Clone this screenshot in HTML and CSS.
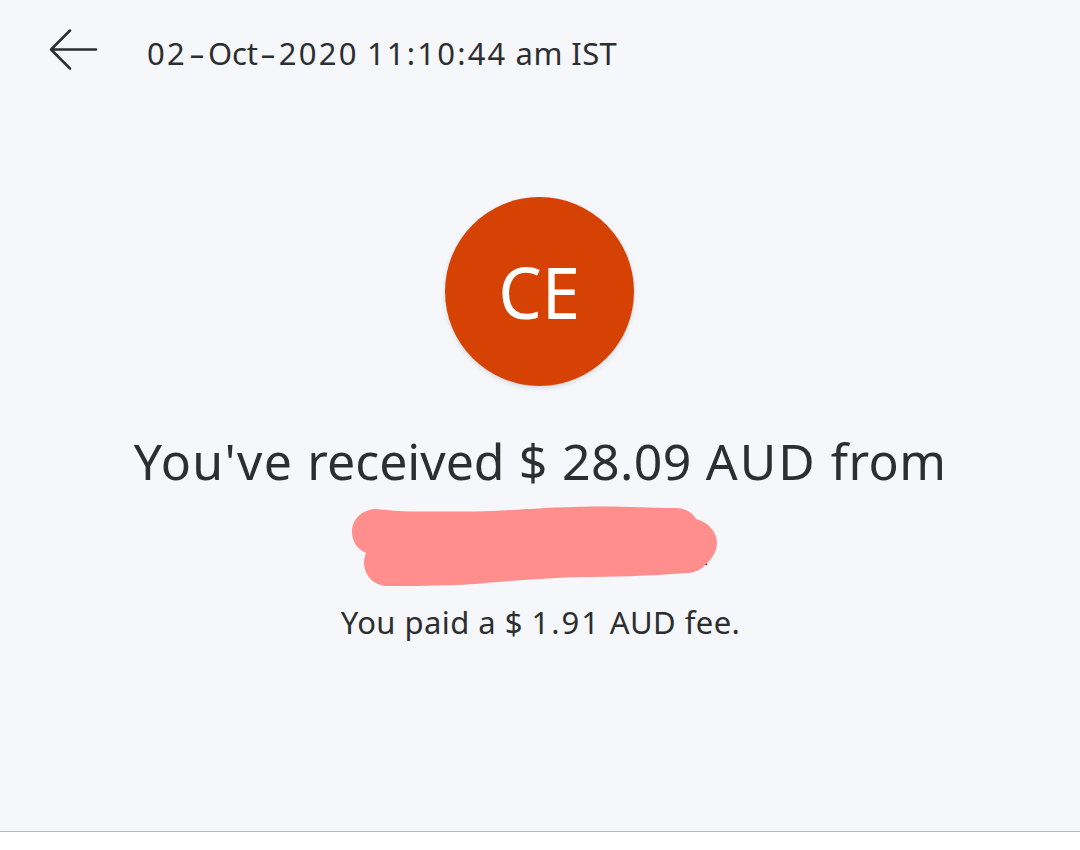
FILE: index.html
```html
<!DOCTYPE html>
<html lang="en">
  <head>
    <meta charset="utf-8">
    <title>Transaction Details</title>
    <link rel="stylesheet" href="styles.css">
  </head>
  <body>
    <div class="details">
      <div class="header">
        <svg class="back" width="50" height="44" viewBox="0 0 50 44">
          <path d="M22 3.500L3 22.500L22 41.500M3 22.500H48" />
        </svg>
        <div class="date"><span class="digits">02<span class="dash">-</span></span><span class="month">Oct</span><span class="digits"><span class="dash">-</span>2020</span> <span class="time">11:10:44</span> <span class="zone">am IST</span></div>
      </div>
      <div class="avatar"><span>CE</span></div>
      <div class="amount"><span class="wide">You've</span> received <span class="value">$ 28.09</span> <span class="currency">AUD</span> <span class="value">from</span></div>
      <svg class="sender" width="370" height="84" viewBox="350 504 370 84">
        <path class="dot" d="M704 562h3v3h-3z" />
        <path class="marker" d="M375 509C388 510 400 511.500 412 511.500H475C510 511 540 507 600 506.500C630 506.500 650 508 676 508C685 508 692 512 696 519C708 522 717 532 717 543C717 553 710 561 703 567C698 571 693 573 686 573C650 576 610 577 580 577C540 578 500 582 475 584C440 586 410 586 386 586C373 585 364 575 364 562C364 559 365 556 366 553C357 549 352 541 352 532C352 519 362 510 375 509Z" />
      </svg>
      <div class="fee">You paid a $ <span class="fee-value">1.91</span> AUD fee.</div>
    </div>
  </body>
</html>
```
FILE: styles.css
```css
body {
  font-family: "Noto Sans", sans-serif;
  margin: 0;
  background-color: #fff;
  color: #2c2e2f;
}
.details {
  display: flex;
  flex-direction: column;
  align-items: center;
  box-sizing: border-box;
  height: 832px;
  background-color: #f5f7fb;
  border-bottom: 1px solid #b7b9bc;
}
.header {
  display: flex;
  box-sizing: border-box;
  width: 100%;
  height: 197px;
  padding: 27px 0 0 48px;
}
.back {
  fill: none;
  stroke: #2c2e2f;
  stroke-width: 2.5;
  stroke-linecap: round;
  stroke-linejoin: round;
}
.date {
  margin: 6px 0 0 49px;
  font-size: 31px;
  line-height: 40px;
  white-space: nowrap;
}
.digits {
  letter-spacing: 2.3px;
}
.dash {
  display: inline-block;
  margin: 0 6px 0 5px;
  letter-spacing: 0;
  transform: scaleX(1.6);
}
.month {
  letter-spacing: -0.2px;
}
.time {
  letter-spacing: 2.2px;
}
.zone {
  letter-spacing: 0.4px;
}
.avatar {
  display: flex;
  justify-content: center;
  width: 189px;
  height: 189px;
  margin-right: 1px;
  border-radius: 50%;
  background-color: #d64204;
  box-shadow: 0 2px 5px rgba(0, 0, 0, 0.12);
  color: #fff;
  font-size: 71px;
  line-height: 190px;
}
.avatar span {
  transform: scaleX(0.97);
}
.amount {
  margin-top: 45px;
  font-size: 50px;
  line-height: 60px;
  word-spacing: 1px;
  white-space: nowrap;
}
.wide {
  letter-spacing: 1.3px;
}
.value {
  letter-spacing: 0.4px;
}
.currency {
  letter-spacing: 2px;
}
.sender {
  margin: 13px 10px 0 0;
}
.marker {
  fill: #ff8e8d;
}
.dot {
  fill: #111;
}
.fee {
  margin: 14px 0 0 1px;
  font-size: 31px;
  line-height: 40px;
  letter-spacing: 0.4px;
  word-spacing: 0.2px;
  white-space: nowrap;
}
.fee-value {
  letter-spacing: 2px;
}
```
